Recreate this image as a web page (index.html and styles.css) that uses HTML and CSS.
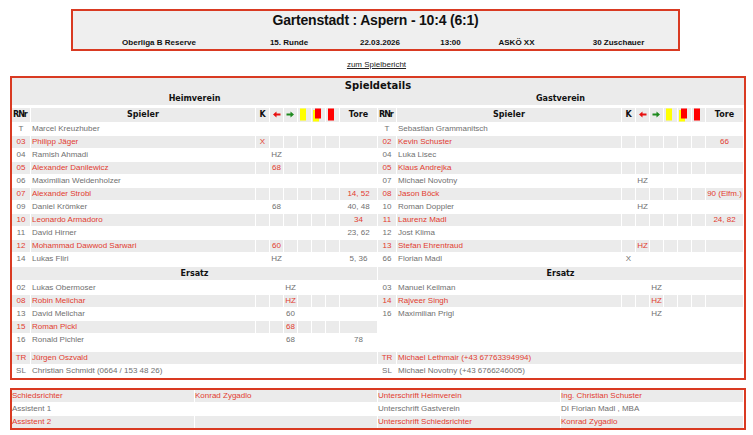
FILE: index.html
```html
<!DOCTYPE html>
<html lang="de">
<head>
<meta charset="utf-8">
<title>Spielbericht</title>
<link rel="stylesheet" href="styles.css">
</head>
<body>
<div class="match">
  <h1 class="match-title">Gartenstadt : Aspern - 10:4 (6:1)</h1>
  <div class="match-info">
    <span>Oberliga B Reserve</span><span>15. Runde</span><span>22.03.2026</span><span>13:00</span><span>ASKÖ XX</span><span>30 Zuschauer</span>
  </div>
</div>
<div class="report-link"><a href="#">zum Spielbericht</a></div>

<section class="details">
  <div class="details-head">
    <h2>Spieldetails</h2>
    <div class="teams"><div>Heimverein</div><div>Gastverein</div></div>
  </div>
  <div class="lineup">
    <!-- column headers -->
    <div class="r thead"><span class="rnr">RNr</span><span>Spieler</span><span>K</span><span><svg width="13" height="14" viewBox="0 0 13 14"><path d="M3 6.5 L6.5 3.5 V5.5 H10.5 V7.5 H6.5 V9.5 Z" fill="#e81010"/></svg></span><span><svg width="13" height="14" viewBox="0 0 13 14"><path d="M10 6.5 L6.5 3.5 V5.5 H2.5 V7.5 H6.5 V9.5 Z" fill="#1f8a1f"/></svg></span><span><svg width="13" height="14" viewBox="0 0 13 14"><rect x="2" y="0.5" width="6" height="12" fill="#ffff00"/></svg></span><span><svg width="13" height="14" viewBox="0 0 13 14"><rect x="1" y="2" width="6" height="11.5" fill="#ffff00"/><rect x="3" y="0.5" width="6" height="10" fill="#ff0000"/></svg></span><span><svg width="13" height="14" viewBox="0 0 13 14"><rect x="2" y="0.5" width="6" height="12" fill="#ff0000"/></svg></span><span>Tore</span></div>
    <div class="r thead"><span class="rnr">RNr</span><span>Spieler</span><span>K</span><span><svg width="13" height="14" viewBox="0 0 13 14"><path d="M3 6.5 L6.5 3.5 V5.5 H10.5 V7.5 H6.5 V9.5 Z" fill="#e81010"/></svg></span><span><svg width="13" height="14" viewBox="0 0 13 14"><path d="M10 6.5 L6.5 3.5 V5.5 H2.5 V7.5 H6.5 V9.5 Z" fill="#1f8a1f"/></svg></span><span><svg width="13" height="14" viewBox="0 0 13 14"><rect x="2" y="0.5" width="6" height="12" fill="#ffff00"/></svg></span><span><svg width="13" height="14" viewBox="0 0 13 14"><rect x="1" y="2" width="6" height="11.5" fill="#ffff00"/><rect x="3" y="0.5" width="6" height="10" fill="#ff0000"/></svg></span><span><svg width="13" height="14" viewBox="0 0 13 14"><rect x="2" y="0.5" width="6" height="12" fill="#ff0000"/></svg></span><span>Tore</span></div>

    <!-- starters -->
    <div class="block">
      <div class="r"><span>T</span><span class="n">Marcel Kreuzhuber</span><span></span><span></span><span></span><span></span><span></span><span></span><span></span></div>
      <div class="r alt"><span>03</span><span class="n">Philipp Jäger</span><span>X</span><span></span><span></span><span></span><span></span><span></span><span></span></div>
      <div class="r"><span>04</span><span class="n">Ramish Ahmadi</span><span></span><span>HZ</span><span></span><span></span><span></span><span></span><span></span></div>
      <div class="r alt"><span>05</span><span class="n">Alexander Danilewicz</span><span></span><span>68</span><span></span><span></span><span></span><span></span><span></span></div>
      <div class="r"><span>06</span><span class="n">Maximilian Weidenholzer</span><span></span><span></span><span></span><span></span><span></span><span></span><span></span></div>
      <div class="r alt"><span>07</span><span class="n">Alexander Strobl</span><span></span><span></span><span></span><span></span><span></span><span></span><span>14, 52</span></div>
      <div class="r"><span>09</span><span class="n">Daniel Krömker</span><span></span><span>68</span><span></span><span></span><span></span><span></span><span>40, 48</span></div>
      <div class="r alt"><span>10</span><span class="n">Leonardo Armadoro</span><span></span><span></span><span></span><span></span><span></span><span></span><span>34</span></div>
      <div class="r"><span>11</span><span class="n">David Hirner</span><span></span><span></span><span></span><span></span><span></span><span></span><span>23, 62</span></div>
      <div class="r alt"><span>12</span><span class="n">Mohammad Dawwod Sarwari</span><span></span><span>60</span><span></span><span></span><span></span><span></span><span></span></div>
      <div class="r"><span>14</span><span class="n">Lukas Fliri</span><span></span><span>HZ</span><span></span><span></span><span></span><span></span><span>5, 36</span></div>
    </div>
    <div class="block">
      <div class="r"><span>T</span><span class="n">Sebastian Grammanitsch</span><span></span><span></span><span></span><span></span><span></span><span></span><span></span></div>
      <div class="r alt"><span>02</span><span class="n">Kevin Schuster</span><span></span><span></span><span></span><span></span><span></span><span></span><span>66</span></div>
      <div class="r"><span>04</span><span class="n">Luka Lisec</span><span></span><span></span><span></span><span></span><span></span><span></span><span></span></div>
      <div class="r alt"><span>05</span><span class="n">Klaus Andrejka</span><span></span><span></span><span></span><span></span><span></span><span></span><span></span></div>
      <div class="r"><span>07</span><span class="n">Michael Novotny</span><span></span><span>HZ</span><span></span><span></span><span></span><span></span><span></span></div>
      <div class="r alt"><span>08</span><span class="n">Jason Böck</span><span></span><span></span><span></span><span></span><span></span><span></span><span>90 (Elfm.)</span></div>
      <div class="r"><span>10</span><span class="n">Roman Doppler</span><span></span><span>HZ</span><span></span><span></span><span></span><span></span><span></span></div>
      <div class="r alt"><span>11</span><span class="n">Laurenz Madl</span><span></span><span></span><span></span><span></span><span></span><span></span><span>24, 82</span></div>
      <div class="r"><span>12</span><span class="n">Jost Klima</span><span></span><span></span><span></span><span></span><span></span><span></span><span></span></div>
      <div class="r alt"><span>13</span><span class="n">Stefan Ehrentraud</span><span></span><span>HZ</span><span></span><span></span><span></span><span></span><span></span></div>
      <div class="r"><span>66</span><span class="n">Florian Madl</span><span>X</span><span></span><span></span><span></span><span></span><span></span><span></span></div>
    </div>

    <!-- substitutes -->
    <div class="ersatz">Ersatz</div>
    <div class="ersatz">Ersatz</div>
    <div class="block subs">
      <div class="r"><span>02</span><span class="n">Lukas Obermoser</span><span></span><span></span><span>HZ</span><span></span><span></span><span></span><span></span></div>
      <div class="r alt"><span>08</span><span class="n">Robin Melichar</span><span></span><span></span><span>HZ</span><span></span><span></span><span></span><span></span></div>
      <div class="r"><span>13</span><span class="n">David Melichar</span><span></span><span></span><span>60</span><span></span><span></span><span></span><span></span></div>
      <div class="r alt"><span>15</span><span class="n">Roman Pickl</span><span></span><span></span><span>68</span><span></span><span></span><span></span><span></span></div>
      <div class="r"><span>16</span><span class="n">Ronald Pichler</span><span></span><span></span><span>68</span><span></span><span></span><span></span><span>78</span></div>
    </div>
    <div class="block subs">
      <div class="r"><span>03</span><span class="n">Manuel Keilman</span><span></span><span></span><span>HZ</span><span></span><span></span><span></span><span></span></div>
      <div class="r alt"><span>14</span><span class="n">Rajveer Singh</span><span></span><span></span><span>HZ</span><span></span><span></span><span></span><span></span></div>
      <div class="r"><span>16</span><span class="n">Maximilian Prigl</span><span></span><span></span><span>HZ</span><span></span><span></span><span></span><span></span></div>
    </div>

    <!-- staff -->
    <div class="block staff">
      <div class="r alt"><span>TR</span><span class="n">Jürgen Oszvald</span></div>
      <div class="r"><span>SL</span><span class="n">Christian Schmidt (0664 / 153 48 26)</span></div>
    </div>
    <div class="block staff">
      <div class="r alt"><span>TR</span><span class="n">Michael Lethmair (+43 67763394994)</span></div>
      <div class="r"><span>SL</span><span class="n">Michael Novotny (+43 6766246005)</span></div>
    </div>
  </div>
</section>

<section class="officials">
  <div class="o-row alt"><span>Schiedsrichter</span><span>Konrad Zygadlo</span><span>Unterschrift Heimverein</span><span>Ing. Christian Schuster</span></div>
  <div class="o-row"><span>Assistent 1</span><span></span><span>Unterschrift Gastverein</span><span>DI Florian Madl , MBA</span></div>
  <div class="o-row alt"><span>Assistent 2</span><span></span><span>Unterschrift Schiedsrichter</span><span>Konrad Zygadlo</span></div>
</section>
</body>
</html>
```

FILE: styles.css
```css
* { box-sizing: border-box; }

body {
  margin: 0;
  background: #fff;
  font-family: "Liberation Sans", Arial, sans-serif;
  font-size: 8px;
  color: #707070;
}

/* match header box */
.match {
  margin: 9px 0 0 71px;
  width: 609px;
  height: 42px;
  border: 2px solid #d93a22;
  background: #efefef;
  color: #111;
}
.match-title {
  margin: 0;
  height: 18px;
  line-height: 18px;
  text-align: center;
  font-size: 14px;
  font-weight: bold;
  letter-spacing: -0.2px;
}
.match-info {
  display: grid;
  grid-template-columns: 172px 88px 94px 47px 85px 1fr;
  margin-top: 9px;
  line-height: 10px;
  font-weight: bold;
  text-align: center;
  white-space: nowrap;
}

.report-link {
  margin-top: 9px;
  height: 10px;
  line-height: 10px;
  text-align: center;
}
.report-link a { color: #222; text-decoration: underline; }

/* details box */
.details {
  margin: 6px 0 0 10px;
  width: 736px;
  border: 2px solid #d93a22;
  padding-bottom: 1px;
}
.details-head { background: #ebebeb; color: #111; }
.details-head h2 {
  margin: 0;
  height: 15px;
  line-height: 16px;
  text-align: center;
  font-family: "DejaVu Sans", Verdana, sans-serif;
  font-size: 10px;
  font-weight: bold;
}
.teams {
  display: grid;
  grid-template-columns: 365px 365px;
  column-gap: 1px;
  height: 12px;
  line-height: 12px;
  text-align: center;
  font-family: "DejaVu Sans", Verdana, sans-serif;
  font-size: 8px;
  font-weight: bold;
}

.lineup {
  display: grid;
  grid-template-columns: 365px 365px;
  column-gap: 1px;
  align-items: start;
}

.r {
  display: grid;
  grid-template-columns: 18px 224px repeat(6, 13px) 37px;
  column-gap: 1px;
  height: 12px;
  line-height: 12px;
  margin-top: 1px;
}
.r > span {
  text-align: center;
  white-space: nowrap;
}
.r > .n { text-align: left; padding-left: 1px; }
.r.alt { color: #e23b30; }
.r.alt > span { background: #ebebeb; }

.thead {
  margin-top: 3px;
  height: 14px;
  line-height: 14px;
  color: #111;
  font-family: "DejaVu Sans", Verdana, sans-serif;
  font-weight: bold;
}
.thead > span { background: #ebebeb; }
.thead svg { display: block; }
.thead .rnr { letter-spacing: -1px; text-align: left; padding-left: 1px; }

.ersatz {
  margin-top: 2px;
  height: 13px;
  line-height: 13px;
  background: #ebebeb;
  text-align: center;
  color: #111;
  font-family: "DejaVu Sans", Verdana, sans-serif;
  font-weight: bold;
}

.subs { padding-top: 1px; }

.staff { margin-top: 5px; }
.staff .r { grid-template-columns: 18px 1fr; }

/* officials box */
.officials {
  margin: 8px 0 0 10px;
  width: 736px;
  border: 2px solid #d93a22;
  padding-right: 1px;
}
.o-row {
  display: grid;
  grid-template-columns: repeat(4, 1fr);
  column-gap: 1px;
  height: 12px;
  line-height: 12px;
  margin-top: 1px;
}
.o-row:first-child { margin-top: 0; }
.o-row > span { white-space: nowrap; }
.o-row.alt { color: #e23b30; }
.o-row.alt > span { background: #ebebeb; }
```
